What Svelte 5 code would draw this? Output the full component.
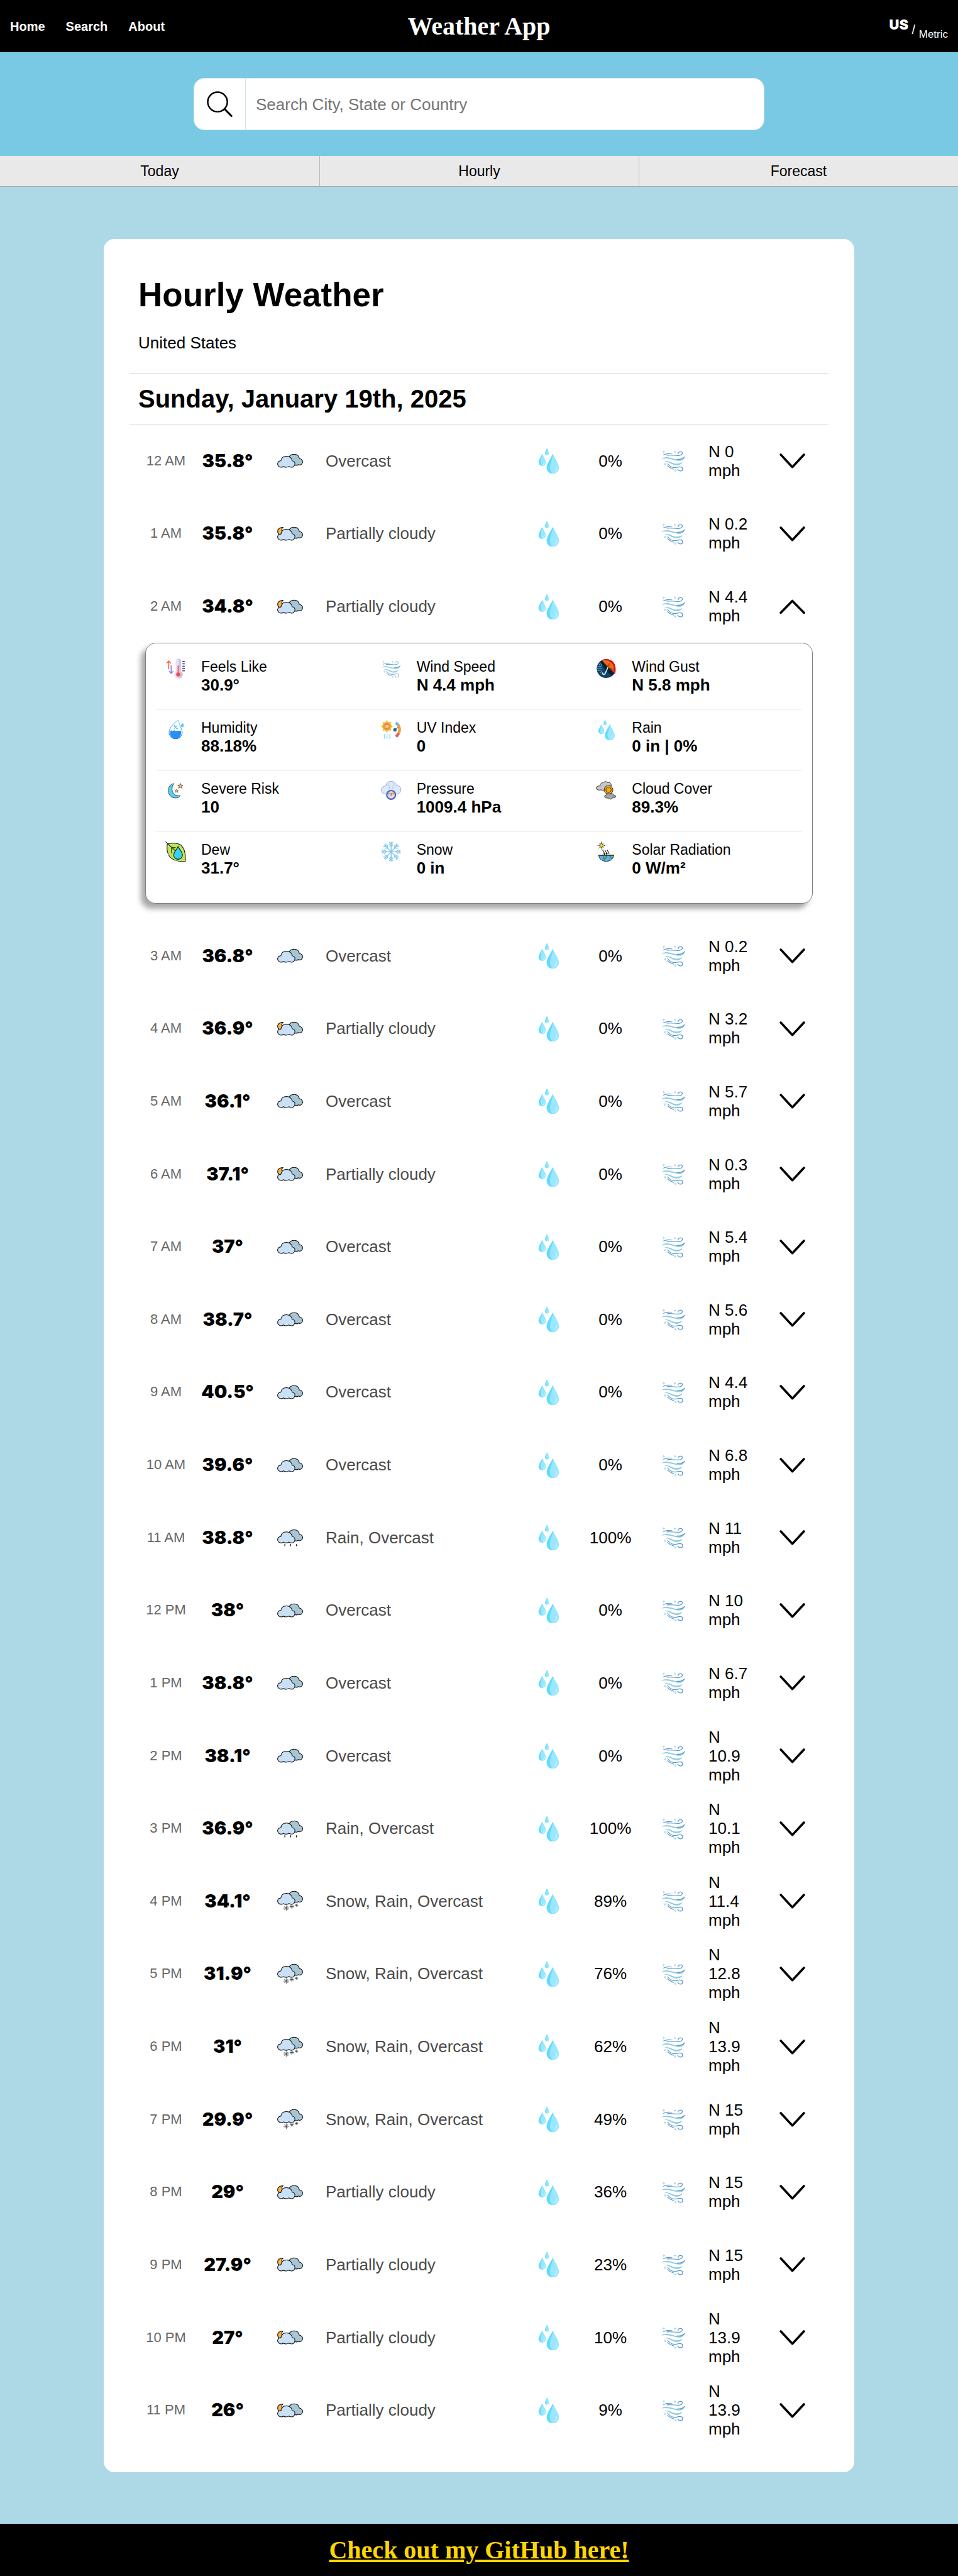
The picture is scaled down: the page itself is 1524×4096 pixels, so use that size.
<script>
  const links = ['Home', 'Search', 'About'];
  const tabs = ['Today', 'Hourly', 'Forecast'];

  const O = 'Overcast';
  const P = 'Partially cloudy';
  const R = 'Rain, Overcast';
  const S = 'Snow, Rain, Overcast';

  let hours = $state(
    [
      ['12 AM', '35.8', O, 0, '0'],
      ['1 AM', '35.8', P, 0, '0.2'],
      ['2 AM', '34.8', P, 0, '4.4', true],
      ['3 AM', '36.8', O, 0, '0.2'],
      ['4 AM', '36.9', P, 0, '3.2'],
      ['5 AM', '36.1', O, 0, '5.7'],
      ['6 AM', '37.1', P, 0, '0.3'],
      ['7 AM', '37', O, 0, '5.4'],
      ['8 AM', '38.7', O, 0, '5.6'],
      ['9 AM', '40.5', O, 0, '4.4'],
      ['10 AM', '39.6', O, 0, '6.8'],
      ['11 AM', '38.8', R, 100, '11'],
      ['12 PM', '38', O, 0, '10'],
      ['1 PM', '38.8', O, 0, '6.7'],
      ['2 PM', '38.1', O, 0, '10.9'],
      ['3 PM', '36.9', R, 100, '10.1'],
      ['4 PM', '34.1', S, 89, '11.4'],
      ['5 PM', '31.9', S, 76, '12.8'],
      ['6 PM', '31', S, 62, '13.9'],
      ['7 PM', '29.9', S, 49, '15'],
      ['8 PM', '29', P, 36, '15'],
      ['9 PM', '27.9', P, 23, '15'],
      ['10 PM', '27', P, 10, '13.9'],
      ['11 PM', '26', P, 9, '13.9']
    ].map(([time, temp, sky, rain, wind, open = false]) => ({ time, temp, sky, rain, wind, open }))
  );

  const details = [
    ['feels', 'Feels Like', '30.9°'],
    ['wind', 'Wind Speed', 'N 4.4 mph'],
    ['gust', 'Wind Gust', 'N 5.8 mph'],
    ['humidity', 'Humidity', '88.18%'],
    ['uv', 'UV Index', '0'],
    ['drops', 'Rain', '0 in | 0%'],
    ['moon', 'Severe Risk', '10'],
    ['pressure', 'Pressure', '1009.4 hPa'],
    ['cover', 'Cloud Cover', '89.3%'],
    ['dew', 'Dew', '31.7°'],
    ['snow', 'Snow', '0 in'],
    ['solar', 'Solar Radiation', '0 W/m²']
  ];

  const star = 'M0 -5 L1.5 -1.7 L5 -1.5 L2.3 .8 L3.2 4.4 L0 2.4 L-3.2 4.4 L-2.3 .8 L-5 -1.5 L-1.5 -1.7Z';
  const diamond = 'M0 -2.2 L1.1 0 L0 2.2 L-1.1 0Z M-2.2 0 H2.2';
</script>

{#snippet clouds()}
  <g stroke="#0b0b0b" stroke-width="1.3" stroke-linejoin="round">
    <path fill="#a8c5d3" d="M23 18C25 13.5 29 12.4 33 12.4C38.5 12.4 42 16 43 20.8C47 21.2 49.6 24.5 49.3 28C48.8 32.2 44.5 34.6 40.8 32.6C38.8 34.2 36 34.2 33.5 33.4L23 30Z" />
    <path fill="#c9e0f6" d="M7 25.4C7.8 19.5 12.5 16.4 18 16.4C24 16.4 28 20.2 29 25.2C32.2 25.6 34.6 28.4 34.3 31.8C34 36 30 38.4 26.6 37.6C25 37.4 24 37 22.8 36.2C20 38.3 14.5 38.4 12 36.3C9.5 38.4 5.4 38.2 3.2 36.2C-1 32.8 .4 25.8 7 25.4Z" />
  </g>
{/snippet}

{#snippet sky(kind)}
  <svg class="icon" viewBox="0 0 50 50" aria-hidden="true">
    {#if kind === O}
      {@render clouds()}
    {:else if kind === P}
      {@render clouds()}
      <path fill="#fbb449" stroke="#0b0b0b" stroke-width="1.3" stroke-linejoin="round" d="M11.5 12.8C5 12.6 .7 16 .8 20.4C.9 23.6 2.8 26 5.4 26.6C5.9 26.3 6.6 26 7.1 25.6C7.4 23.5 8.4 21.6 9.8 20.1C7.8 17.8 8.6 14.6 11.5 12.8Z" />
    {:else if kind === R}
      <g transform="translate(0 -2)">{@render clouds()}</g>
      <path stroke="#111" stroke-width="1.6" d="M14.8 38V42M26 38V42M37.5 38V42" />
    {:else}
      <g transform="translate(0 -6)">{@render clouds()}</g>
      <g stroke="#3c3f44" stroke-width="1">
        <path d="M17.5 33.5V44.5M12 39H23M13.8 35.3L21.2 42.7M21.2 35.3L13.8 42.7" />
        <path d="M28.3 31.8V40.2M24.2 36H32.4M25.5 33.2L31.1 38.8M31.1 33.2L25.5 38.8" />
        <path d="M37.5 30.5V36.3M34.4 33.4H40.6M35.4 31.4L39.6 35.4M39.6 31.4L35.4 35.4" />
      </g>
    {/if}
  </svg>
{/snippet}

{#snippet drops()}
  <svg class="icon" viewBox="0 0 50 50" aria-hidden="true">
    <g fill="#62dcfe">
      <path d="M22.2 0C21.6 3 18.3 6.8 18.3 10C18.3 12.5 20 14 22.2 14C24.4 14 26 12.5 26 10C26 6.8 22.8 3 22.2 0Z" />
      <path d="M12.8 11.7C12 15.5 5.8 23 5.8 28C5.8 32.2 9 35 12.8 35C16.6 35 19.8 32.2 19.8 28C19.8 23 13.6 15.5 12.8 11.7Z" />
      <path d="M33.3 11.6C32 17 21.4 30 21.4 38.6C21.4 45.5 26.8 50 33.2 50C39.6 50 45 45.5 45 38.6C45 30 34.6 17 33.3 11.6Z" />
    </g>
    <g fill="#9be7ff">
      <path d="M22.4 2C22 5 20.6 7.5 20.8 10C21 12.6 22 13.8 23 13.8C24.8 13.4 26 12 26 10C26 7 23.2 4 22.4 2Z" />
      <path d="M13 13.5C12 19 9.4 24 9.8 28.5C10.2 32.5 12 34.8 14 34.8C17.5 34 19.8 31.6 19.8 28C19.8 23.3 14.4 17 13 13.5Z" />
      <path d="M34 14C32.5 22 27.8 31 28 38.8C28.2 45.5 31.5 49.8 34.5 50C40.2 49.6 45 45 45 38.6C45 30.5 36.5 20 34 14Z" />
    </g>
    <path d="M41 37C41.4 41 39.8 44 37.2 45.4M17 27.5C17.2 29.8 16.4 31.4 15 32.2" fill="none" stroke="#c9f2ff" stroke-width="1.5" stroke-linecap="round" />
  </svg>
{/snippet}

{#snippet wind()}
  <svg class="icon" viewBox="0 0 50 50" aria-hidden="true">
    <path fill="#93cddf" d="M1.3 21.6C9 15.5 19 19.6 27 21.6C35 22.8 42 20.4 46.8 17C46 22.4 41 25.6 35 25.2C25 24.8 14 18.6 1.3 21.6ZM6.5 26.6C14 23.2 20 28.6 27 30.6C33 31.6 38 30 42.3 28.2C39 34 32 35.4 26 33.2C18 30.4 14 26.2 6.5 26.6Z" />
    <g fill="none" stroke="#5a9acb" stroke-width="1.5" stroke-linecap="round">
      <path d="M5.6 13.8C9 12.2 14 11.2 18.8 11.6M21.4 11.6H21.8M12.5 14.6C20 13.2 28 15.6 35 15C42.6 14.6 44 8.8 39.6 7.8C35.6 7.2 33 9.6 34.2 11.4" />
      <path d="M32 22.4C38 23 43.5 21 46.6 17.2" />
      <path d="M13.6 30.8C18 37 25 39.6 32 38C38 35.6 43.2 37.6 42.6 41.6C42 46 35.4 46.2 33.2 41.8M13.4 35C16.6 38.4 20.6 40.4 25 41.6" />
    </g>
    <g fill="none" stroke="#9bd3e3" stroke-width=".9">
      <path transform="translate(6 8)" d={diamond} />
      <path transform="translate(27.7 8)" d={diamond} />
      <path transform="translate(8.6 31.8)" d={diamond} />
      <path transform="translate(28.4 44.4)" d={diamond} />
    </g>
  </svg>
{/snippet}

{#snippet detailIcon(name)}
  {#if name === 'wind'}
    {@render wind()}
  {:else if name === 'drops'}
    {@render drops()}
  {:else}
    <svg class="icon" viewBox="0 0 40 40" aria-hidden="true">
      {#if name === 'feels'}
        <g fill="none" stroke-width="2" stroke-linecap="round" stroke-linejoin="round">
          <path stroke="#fd5f4b" d="M6.5 20V5.2M3 8.8L6.5 5L10 8.8" />
          <path stroke="#8089ee" d="M11.2 14V28.6M7.8 25.2L11.2 28.8L14.8 25.2" />
          <path stroke="#4b4180" d="M33.6 5.8H36.8M33.6 10.3H36.8M33.6 14.8H36.8M33.6 19.3H36.8M33.6 23.8H36.8" />
        </g>
        <path fill="#e6e2f4" d="M20 5A5 5 0 0 1 30 5V24.4A8 8 0 1 1 20 24.4Z" />
        <path fill="#c8c2e6" d="M25.5 0A5 5 0 0 1 30 5V24.4A8 8 0 0 1 25.5 39C31 33 27 28 27.4 24Z" />
        <path stroke="#fb5a58" stroke-width="2.6" stroke-linecap="round" d="M24.9 14.6V30" />
        <circle cx="24.9" cy="31" r="4" fill="#fb4a55" />
      {:else if name === 'humidity'}
        <defs>
          <linearGradient id="humid" x1="0" y1="0" x2="0" y2="1">
            <stop offset="0" stop-color="#9be4fd" /><stop offset="1" stop-color="#1f7ff5" />
          </linearGradient>
        </defs>
        <path fill="#fff" stroke="url(#humid)" stroke-width="1.4" d="M25.2 .8C17 6 7.2 15.6 7.2 26A12.8 12.6 0 0 0 32.6 26C32.6 17 25.8 10 25.2 .8Z" />
        <path fill="#2a8ff9" d="M9.4 22.6C11 20.4 12.4 20.8 13.8 22.4C15.4 22.8 16 20.6 18 21C20 23.4 22 22.4 24 21.4C26 22.8 28.5 20 30.2 22.4C32.4 30 27 36.8 20 36.8C12.6 36.8 7.4 30.4 9.4 22.6Z" />
        <path fill="#69c2fb" d="M34 6.4C33.4 8.4 29.6 9.4 29.8 12.6A3 3 0 0 0 35.6 12.6C35.8 10.4 34.4 8.8 34 6.4Z" />
        <path stroke="#54b4fb" stroke-width="1.4" d="M17 17.6L23 11.6" />
        <circle cx="18" cy="12.6" r="1.6" fill="#54b4fb" /><circle cx="22.6" cy="17" r="1.6" fill="#54b4fb" />
      {:else if name === 'moon'}
        <path fill="#5acdee" stroke="#31474f" stroke-width="1.1" stroke-linejoin="round" d="M16.8 6C9 6.6 5.6 13.4 5.8 20.4C6.4 29 12.6 34 19.6 33.8C24 33.6 27.4 31.8 29 29C20 31 13.6 25.6 13 18C12.8 13 13.8 9 16.8 6Z" />
        <g fill="#f9c06c" stroke="#4d4238" stroke-width="1">
          <path transform="translate(29 10.6)" d={star} />
          <path transform="translate(21.8 20) scale(.7)" d={star} />
        </g>
      {:else if name === 'dew'}
        <g stroke="#111" stroke-width="1.3" stroke-linejoin="round" stroke-linecap="round">
          <path fill="#bfe352" d="M4 4.8C11 2.6 25 2 31.4 8.2C37.8 15 39.4 27 38.4 38.4C27 39.2 14.6 36.6 8.4 29.4C2.4 21 3 10 4 4.8Z" />
          <path fill="none" d="M.8 .8L20 18.6M12 22V11.8H19.4" />
          <path fill="#37d2f3" d="M24.6 9.6C23.4 14 16.2 20 16.2 26.4A8.4 8 0 0 0 33 26.4C33 20 25.8 14 24.6 9.6Z" />
        </g>
        <path stroke="#fff" stroke-width="1.6" d="M4 22.5L5.6 22M5.4 26L7 25.2" />
      {:else if name === 'uv'}
        <path fill="#f3c22e" d="M11.5 1.5L14.6 5.6L19.8 4.8L19 10L23.4 13.2L19 16.6L19.8 21.8L14.6 21L11.5 25.4L8.2 21L3.2 21.8L4 16.6L-.2 13.2L4 10L3.2 4.8L8.2 5.6Z" />
        <circle cx="11.5" cy="13.3" r="6.8" fill="#e88e3c" />
        <text x="11.5" y="15.6" text-anchor="middle" font-size="6" font-weight="700" fill="#fff">UV</text>
        <path fill="none" stroke="#7fd2f2" stroke-width="1.4" stroke-linecap="round" d="M7 28.5C4.5 31.5 8.6 33.5 6 36.8M12.3 28.5C9.8 31.5 13.9 33.5 11.3 36.8M17.6 28.5C15.1 31.5 19.2 33.5 16.6 36.8" />
        <g fill="none" stroke-width="5.4">
          <path stroke="#66bcd1" d="M28.6 6.6C30.6 7.6 32.2 9 33.4 10.8" />
          <path stroke="#ee9d3c" d="M33.2 10.6C36.8 15.4 36.8 22.6 33.8 27.4" />
          <path stroke="#dd5a68" d="M34 27C32.6 29.6 31 31.6 29 32.8" />
        </g>
        <path stroke="#5b98bd" stroke-width="1.8" d="M27 20L33.6 14.6" />
        <circle cx="27" cy="20" r="3.3" fill="#2f5f86" />
      {:else if name === 'pressure'}
        <path fill="#dce8fb" stroke="#8597dc" stroke-width="1" d="M9.4 10.4C10.2 4.6 14.4 1.6 19.6 1.6C24.8 1.6 28.4 4.8 29.6 9.2C35 9 38.6 13 38.4 18C38.2 23.4 34 26.6 29.4 26.4H9.6C4.6 26.4 .6 23 .8 18C1 13.4 4.6 10.4 9.4 10.4Z" />
        <path fill="none" stroke="#a7c3f3" stroke-width="1.2" d="M15.4 5C13.4 9 18 12 15.6 17M23.4 5C25.4 9 21 12 23.6 17" />
        <circle cx="19.6" cy="27.8" r="8.4" fill="#f6cfd1" stroke="#4467c3" stroke-width="2.6" />
        <path fill="#57cfd4" d="M13.2 27.8A6.6 6.6 0 0 1 15.6 22.8L18 26Z" />
        <path fill="#f7d774" d="M15.6 22.6A6.6 6.6 0 0 1 23.4 22.6L21 25.6H18Z" />
        <path fill="#f0808c" d="M23.6 22.8A6.6 6.6 0 0 1 26 27.8L21.4 26Z" />
        <path stroke="#4467c3" stroke-width="1.4" d="M19.6 24.2V29.6" />
      {:else if name === 'snow'}
        <g fill="none" stroke="#80c6ea" stroke-width="1.7" stroke-linecap="round" stroke-linejoin="round">
          {#each [0, 45, 90, 135, 180, 225, 270, 315] as angle}
            <path transform="translate(19.6 19.6) rotate({angle})" d="M0 0V-18.6M-3.4 -17.4L0 -14L3.4 -17.4M-3.6 -13.4L0 -9.8L3.6 -13.4" />
          {/each}
        </g>
      {:else if name === 'gust'}
        <circle cx="19.6" cy="19.6" r="18" fill="#0f426b" />
        <path fill="#08222f" d="M8 6L14 3L37 28L31 33.6L19 24Z" />
        <path fill="#cd1613" d="M11 3.4C20 -.8 30 1.6 35 9C38.4 15 39 23 36.8 29.6Z" />
        <path fill="#ef6a16" d="M12.4 4.4C18 1.8 24 3 27.6 7L23.4 16ZM27.8 7C32.4 9.6 35 14 35 20L24.4 17Z" />
        <path fill="#d94a0e" d="M27.8 7L24 16.6L21 13.6ZM35 20C35.4 23.4 35.6 26 36 28.4L25 17.4Z" />
        <path fill="none" stroke="#dcf3f2" stroke-width="2.1" stroke-linecap="round" d="M23 17.6L18.4 28C16.8 32 12.4 31 12.8 28" />
        <path fill="none" stroke="#72b7b6" stroke-width="1.2" stroke-linecap="round" d="M1.6 15.6H8.4C12.4 15 11.4 9.6 8 10.4C5.8 11 6.2 13.4 7.8 13.4M.8 19.6H12M2 23H9C12 23.6 11.4 28 8.4 27.6" />
      {:else if name === 'cover'}
        <g stroke="#2f2f2f" stroke-width="1.2" stroke-linejoin="round">
          <path fill="#c5c7c9" d="M2.4 17.4C-.6 16 .2 11.4 3.4 11.4C5 10 6.8 10.4 8 11C8 6 11.4 3.8 14 4.6C16.4 1 21 2 22 4C27 2.4 31 7 29 11.6L24 21C21 23.4 18.6 21.4 17.6 20C13.6 21 11.4 19.8 10.4 17.8C8 19 5 19 2.4 17.4Z" />
          <circle cx="24.4" cy="18" r="8.2" fill="#f1bf1d" stroke-dasharray="2 .8" stroke-width="1.6" />
          <circle cx="24.4" cy="18" r="5.2" fill="#ffa609" />
          <path fill="#a3a5a8" d="M18.4 32.8C15.6 31.6 16.6 28 19.6 28.4C21 25 25 24.6 26.6 26.4C30 23.8 34 25.8 34.4 28.6C38.8 28 39.4 32 36 33C34.6 34 33.4 33.6 32.4 33.2C31 36.4 26 37.2 23.8 33.8C22 34.4 20 34 18.4 32.8Z" />
        </g>
      {:else if name === 'solar'}
        <g fill="none" stroke="#1c1c1c" stroke-width="1.1">
          <circle cx="10.6" cy="7.8" r="3.6" fill="#fbd21d" />
          <path d="M10.6 .4V2.6M10.6 13V15.2M3.2 7.8H5.4M15.8 7.8H18M5.4 2.6L6.9 4.1M14.3 11.5L15.8 13M5.4 13L6.9 11.5M14.3 4.1L15.8 2.6" />
          <path stroke-width="1.4" d="M13 15.8C13 19 16.6 20 16.6 24.4M17.4 15.8C17.4 19 21 20 21 24.4M21.8 15.8C21.8 19 25.4 20 25.4 24.4M14.8 23L16.6 24.8L17.8 22.8M19.2 23L21 24.8L22.2 22.8" />
          <path fill="#5aaef2" d="M5.6 26.6H34C33.4 33.8 27.6 38.2 20 38.2C12.2 38.2 6.2 33.8 5.6 26.6Z" />
          <path fill="#58c052" stroke-width=".8" d="M12.4 26.8H20.4C20.6 30 18 34 16 34.4C14.6 32 15.4 29.6 12.4 26.8ZM26 26.8H34C33.6 29.6 32.4 32 30.8 33C29 31 27.4 30.6 26 26.8Z" />
          <path stroke-width="1.4" d="M4.4 26.4H35.2" />
        </g>
      {/if}
    </svg>
  {/if}
{/snippet}

<div class="page">
  <header class="topbar">
    <nav aria-label="Main">
      {#each links as link}
        <a href="#{link.toLowerCase()}">{link}</a>
      {/each}
    </nav>
    <h1>Weather App</h1>
    <button class="units" type="button"><span class="active">US</span> / <span class="other">Metric</span></button>
  </header>

  <form class="search" role="search" onsubmit={(e) => e.preventDefault()}>
    <div class="field">
      <button type="submit" aria-label="Search">
        <svg class="icon" viewBox="0 0 50 50" aria-hidden="true">
          <g fill="none" stroke="#000" stroke-width="3">
            <circle cx="20.8" cy="20.8" r="19" />
            <path stroke-width="3.6" stroke-linecap="round" d="M35 35L47.8 48" />
          </g>
        </svg>
      </button>
      <input type="text" aria-label="Location" placeholder="Search City, State or Country" />
    </div>
  </form>

  <nav class="tabs" aria-label="Views">
    {#each tabs as tab}
      <a href="#{tab.toLowerCase()}">{tab}</a>
    {/each}
  </nav>

  <main>
    <section class="card">
      <h2>Hourly Weather</h2>
      <p class="place">United States</p>
      <h3>Sunday, January 19th, 2025</h3>

      <div class="hours">
        {#each hours as hour (hour.time)}
          <div class="hour">
            <span class="time">{hour.time}</span>
            <span class="temp">{hour.temp}°</span>
            {@render sky(hour.sky)}
            <span class="sky">{hour.sky}</span>
            {@render drops()}
            <span class="rain">{hour.rain}%</span>
            {@render wind()}
            <span class="speed">N {hour.wind} mph</span>
            <button
              class="toggle"
              type="button"
              aria-label="Details for {hour.time}"
              aria-expanded={hour.open}
              onclick={() => (hour.open = !hour.open)}
            >
              <svg class="icon" viewBox="0 0 50 50" aria-hidden="true">
                <path fill="none" stroke="#000" stroke-width="4.4" stroke-linecap="round" stroke-linejoin="round" d={hour.open ? 'M2.6 37L25 14L47.4 37' : 'M2.6 13.4L25 37.4L47.4 13.4'} />
              </svg>
            </button>
          </div>
          {#if hour.open}
            <dl class="details">
              {#each details as [icon, label, value]}
                <div class="detail">
                  {@render detailIcon(icon)}
                  <div>
                    <dt>{label}</dt>
                    <dd>{value}</dd>
                  </div>
                </div>
              {/each}
            </dl>
          {/if}
        {/each}
      </div>
    </section>
  </main>

  <footer><a href="#github">Check out my GitHub here!</a></footer>
</div>

<style>
  :global(body) {
    margin: 0;
    background: #add8e6;
  }

  .page {
    display: flex;
    flex-direction: column;
    min-height: 100vh;
    font-family: 'Liberation Sans', Arial, sans-serif;
    font-size: 26px;
    line-height: 30px;
    color: #000;
  }

  .page * {
    box-sizing: border-box;
  }

  h1, h2, h3, p, dl, dd {
    margin: 0;
  }

  button {
    padding: 0;
    border: 0;
    background: none;
    color: inherit;
    font: inherit;
    cursor: pointer;
  }

  a {
    color: inherit;
    text-decoration: none;
  }

  .icon {
    display: block;
    width: 41px;
    height: 41px;
  }

  .topbar {
    display: grid;
    grid-template-columns: 1fr auto 1fr;
    align-items: center;
    height: 83px;
    padding: 0 16px;
    background: #000;
    color: #fff;
  }

  .topbar nav {
    display: flex;
    gap: 33px;
    font-size: 20px;
    font-weight: 700;
  }

  h1 {
    font: 700 40px/46px 'Liberation Serif', 'Times New Roman', serif;
  }

  .units {
    justify-self: end;
    padding-top: 7px;
    font-size: 20px;
  }

  .units .active {
    font: 900 22px/22px Inter, 'Liberation Sans', sans-serif;
    vertical-align: 7px;
  }

  .units .other {
    font-size: 17px;
    line-height: 17px;
    vertical-align: -6px;
  }

  .search {
    display: flex;
    justify-content: center;
    align-items: center;
    height: 165px;
    padding: 0 16px;
    background: #79c9e5;
  }

  .field {
    display: flex;
    width: 100%;
    max-width: 908px;
    height: 83px;
    border: 1px solid #d5eaf0;
    border-radius: 17px;
    background: #fff;
    overflow: hidden;
  }

  .field button {
    display: grid;
    place-items: center;
    width: 82px;
    border-right: 1px solid #d5e4e8;
  }

  .field input {
    flex: 1;
    min-width: 0;
    padding: 0 16px;
    border: 0;
    outline: 0;
    background: none;
    font: inherit;
  }

  .field input::placeholder {
    color: #757575;
  }

  .tabs {
    display: grid;
    grid-template-columns: repeat(3, 1fr);
    height: 49px;
    border-bottom: 1px solid #a9aaaa;
    background: #e9e9e9;
    font-size: 23px;
  }

  .tabs a {
    display: grid;
    place-items: center;
  }

  .tabs a + a {
    border-left: 1px solid #b9b9b9;
  }

  main {
    flex: 1;
    display: flex;
    padding: 83px 165px 82px;
  }

  .card {
    flex: 1;
    display: flex;
    flex-direction: column;
    min-width: 0;
    padding: 41px;
    border-radius: 17px;
    background: #fff;
  }

  h2 {
    padding: 17px 14px 31px;
    font-size: 53px;
    line-height: 61px;
  }

  .place {
    padding: 0 14px 33px;
    border-bottom: 1px solid #dcdcdc;
  }

  h3 {
    padding: 17px 14px;
    border-bottom: 1px solid #dcdcdc;
    font-size: 40px;
    line-height: 46px;
  }

  .hours {
    flex: 1;
    display: flex;
    flex-direction: column;
  }

  .hour {
    flex: 1 0 112px;
    display: grid;
    grid-template-columns: 100fr 96fr 102fr 310fr 100fr 98fr 102fr 90fr 96fr;
    align-items: center;
    justify-items: center;
    padding: 0 10px 0 8px;
  }

  .time {
    font-size: 22px;
    color: #666;
  }

  .temp {
    font-family: Inter, 'Liberation Sans', sans-serif;
    font-size: 29px;
    font-weight: 900;
  }

  .sky {
    justify-self: start;
    padding-left: 6px;
    color: #4a4a4a;
  }

  .speed {
    justify-self: stretch;
    padding: 0 12px 0 5px;
  }

  .details {
    display: grid;
    grid-template-columns: repeat(3, 1fr);
    margin: 0 25px 25px;
    padding: 8px 16px 17px;
    border: 1px solid #808080;
    border-radius: 17px;
    background: #fff;
    box-shadow: -7px 8px 8px rgba(0, 0, 0, 0.34);
  }

  .detail {
    display: flex;
    gap: 24px;
    padding: 16px 15px 23px;
    border-bottom: 1px solid #dcdcdc;
  }

  .detail:nth-last-child(-n + 3) {
    border-bottom-color: transparent;
  }

  .detail .icon,
  .detail :global(.icon) {
    width: 33px;
    height: 33px;
  }

  dt {
    font-size: 23px;
    line-height: 27px;
  }

  dd {
    font-weight: 700;
  }

  footer {
    display: grid;
    place-items: center;
    height: 83px;
    background: #000;
    color: #ffd700;
    font: 700 40px/46px 'Liberation Serif', 'Times New Roman', serif;
  }

  footer a {
    text-decoration: underline;
  }
</style>
